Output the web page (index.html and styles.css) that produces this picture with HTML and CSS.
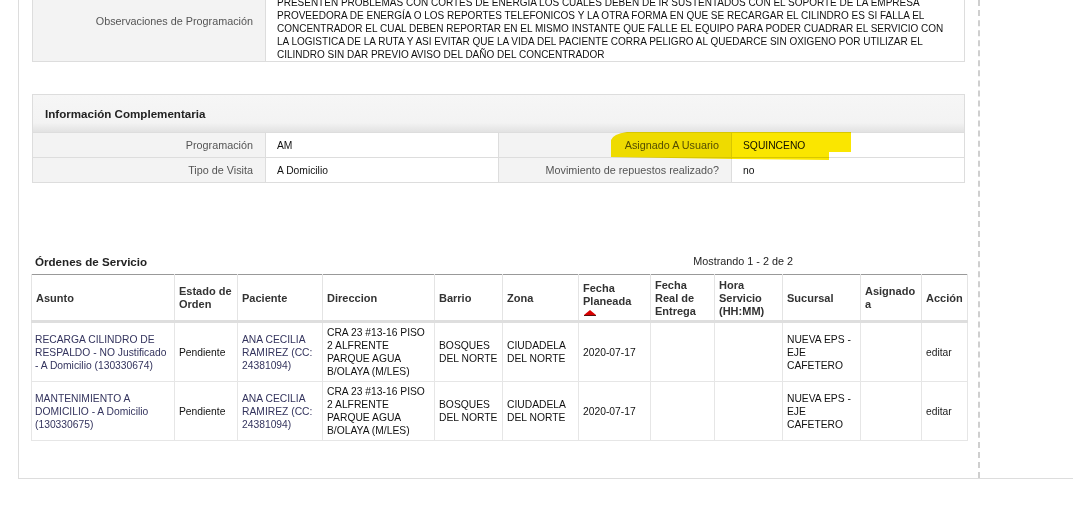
FILE: index.html
```html
<!DOCTYPE html>
<html lang="es">
<head>
    <meta charset="UTF-8">
    <title>Detalle de Programación</title>
    <link rel="stylesheet" href="styles.css">
</head>
<body>
    <div class="page">
        <div class="content">

            <!-- Observaciones -->
            <table class="obs-table">
                <tr>
                    <td class="label">Observaciones de Programación</td>
                    <td class="value obs-text">
                        SE DEBE RECARGAR EL CILINDRO DE RESPALDO UNICAMENTE EN LOS CASOS EN QUE LOS PACIENTES NO CUENTEN CON ENERGIA O<br>
                        PRESENTEN PROBLEMAS CON CORTES DE ENERGIA LOS CUALES DEBEN DE IR SUSTENTADOS CON EL SOPORTE DE LA EMPRESA<br>
                        PROVEEDORA DE ENERGÍA O LOS REPORTES TELEFONICOS Y LA OTRA FORMA EN QUE SE RECARGAR EL CILINDRO ES SI FALLA EL<br>
                        CONCENTRADOR EL CUAL DEBEN REPORTAR EN EL MISMO INSTANTE QUE FALLE EL EQUIPO PARA PODER CUADRAR EL SERVICIO CON<br>
                        LA LOGISTICA DE LA RUTA Y ASI EVITAR QUE LA VIDA DEL PACIENTE CORRA PELIGRO AL QUEDARCE SIN OXIGENO POR UTILIZAR EL<br>
                        CILINDRO SIN DAR PREVIO AVISO DEL DAÑO DEL CONCENTRADOR
                    </td>
                </tr>
            </table>

            <!-- Informacion complementaria -->
            <div class="info">
                <div class="info-head">Información Complementaria</div>
                <table class="info-table">
                    <tr>
                        <td class="label">Programación</td>
                        <td class="value">AM</td>
                        <td class="label">Asignado A Usuario</td>
                        <td class="value">SQUINCENO</td>
                    </tr>
                    <tr>
                        <td class="label">Tipo de Visita</td>
                        <td class="value">A Domicilio</td>
                        <td class="label">Movimiento de repuestos realizado?</td>
                        <td class="value">no</td>
                    </tr>
                </table>
                <svg class="marker" width="244" height="30" viewBox="0 0 244 30">
                    <path d="M1,9 Q3,3 17,1 L241,1 L241,21 L219,21 L219,29 L123,28 L30,26.5 L1,26 Z" fill="#fae600"/>
                </svg>
            </div>

            <!-- Ordenes de servicio -->
            <div class="orders">
                <div class="orders-bar">
                    <span class="orders-title">Órdenes de Servicio</span>
                    <span class="pager">Mostrando 1 - 2 de 2</span>
                </div>
                <table class="orders-table">
                    <thead>
                        <tr>
                            <th class="c-asunto">Asunto</th>
                            <th class="c-estado">Estado de Orden</th>
                            <th class="c-paciente">Paciente</th>
                            <th class="c-dir">Direccion</th>
                            <th class="c-barrio">Barrio</th>
                            <th class="c-zona">Zona</th>
                            <th class="c-fecha">Fecha Planeada<span class="sort-up"></span></th>
                            <th class="c-real">Fecha Real de Entrega</th>
                            <th class="c-hora">Hora Servicio (HH:MM)</th>
                            <th class="c-sucursal">Sucursal</th>
                            <th class="c-asignado">Asignado a</th>
                            <th class="c-accion">Acción</th>
                        </tr>
                    </thead>
                    <tbody>
                        <tr>
                            <td class="asunto"><a href="#">RECARGA CILINDRO DE RESPALDO - NO Justificado - A Domicilio (130330674)</a></td>
                            <td>Pendiente</td>
                            <td><a href="#">ANA CECILIA RAMIREZ (CC: 24381094)</a></td>
                            <td>CRA 23 #13-16 PISO 2 ALFRENTE PARQUE AGUA B/OLAYA (M/LES)</td>
                            <td>BOSQUES DEL NORTE</td>
                            <td>CIUDADELA DEL NORTE</td>
                            <td>2020-07-17</td>
                            <td></td>
                            <td></td>
                            <td>NUEVA EPS - EJE CAFETERO</td>
                            <td></td>
                            <td><a href="#" class="plain">editar</a></td>
                        </tr>
                        <tr>
                            <td class="asunto"><a href="#">MANTENIMIENTO A DOMICILIO - A Domicilio (130330675)</a></td>
                            <td>Pendiente</td>
                            <td><a href="#">ANA CECILIA RAMIREZ (CC: 24381094)</a></td>
                            <td>CRA 23 #13-16 PISO 2 ALFRENTE PARQUE AGUA B/OLAYA (M/LES)</td>
                            <td>BOSQUES DEL NORTE</td>
                            <td>CIUDADELA DEL NORTE</td>
                            <td>2020-07-17</td>
                            <td></td>
                            <td></td>
                            <td>NUEVA EPS - EJE CAFETERO</td>
                            <td></td>
                            <td><a href="#" class="plain">editar</a></td>
                        </tr>
                    </tbody>
                </table>
            </div>

        </div>
    </div>
</body>
</html>
```

FILE: styles.css
```css
body {
    margin: 0;
    background-color: #fff;
    font-family: "Liberation Sans", Arial, sans-serif;
    font-size: 11px;
    line-height: 13px;
    color: #111;
}

/* page is scrolled a bit, top of the first box is hidden */
.page {
    margin-top: -20px;
    margin-left: 18px;
    border-left: 1px solid #ddd;
    border-bottom: 1px solid #ddd;
}

.content {
    width: 946px;
    padding: 0 0 37px 13px;
    border-right: 2px dashed #cfcfcf;
}

table {
    border-collapse: collapse;
}

.label {
    background-color: #f3f3f3;
    color: #555;
    font-size: 10.8px;
    text-align: right;
    padding: 0 12px 0 10px;
}

.value {
    background-color: #fff;
    font-size: 10.3px;
    padding: 0 11px;
}

/* Observaciones */
.obs-table {
    width: 933px;
    table-layout: fixed;
    border: 1px solid #ddd;
}

.obs-table .label {
    width: 233px;
    box-sizing: border-box;
}

.obs-text {
    font-size: 10px;
    padding-top: 2px;
    padding-bottom: 0;
    height: 78px;
    white-space: nowrap;
    border-left: 1px solid #ddd;
}

/* Informacion complementaria */
.info {
    position: relative;
    width: 933px;
    margin-top: 32px;
}

.info-head {
    border: 1px solid #ddd;
    border-bottom: none;
    padding: 12px 12px;
    font-size: 11.6px;
    font-weight: bold;
    color: #222;
    background: linear-gradient(to bottom, #f6f6f6 0, #f3f3f3 75%, #e2e2e2 100%);
}

.info-table {
    width: 100%;
    table-layout: fixed;
    border: 1px solid #ddd;
}

.info-table td {
    border: 1px solid #ddd;
    padding-top: 6px;
    padding-bottom: 5px;
    white-space: nowrap;
}

.marker {
    position: absolute;
    left: 578px;
    top: 37px;
    mix-blend-mode: multiply;
}

/* Ordenes de servicio */
.orders {
    margin: 72px 0 0 -1px;
    width: 936px;
}

.orders-bar {
    display: flex;
    align-items: center;
    padding: 0 0 6px 4px;
}

.orders-title {
    flex: 1;
    font-size: 11.6px;
    font-weight: bold;
    color: #222;
}

.pager {
    margin-right: 174px;
    font-size: 10.8px;
    color: #222;
}

.orders-table {
    width: 936px;
    table-layout: fixed;
    border: 1px solid #e4e4e4;
    border-top: 1px solid #999;
}

.orders-table th {
    box-sizing: border-box;
    text-align: left;
    vertical-align: middle;
    font-weight: bold;
    color: #333;
    padding: 3px 3px 2px 4px;
    height: 47px;
    border-left: 1px solid #e4e4e4;
    border-bottom: 3px solid #dedede;
    background-color: #fff;
}

.orders-table td {
    vertical-align: middle;
    font-size: 10.3px;
    padding: 3px 2px 3px 4px;
    height: 52px;
    border: 1px solid #e6e6e6;
    color: #111;
}

.orders-table td.asunto {
    padding-left: 3px;
}

.orders-table a {
    color: #34345e;
    text-decoration: none;
}

.orders-table a.plain {
    color: #222;
}

.c-asunto { width: 143px; }
.c-estado { width: 63px; }
.c-paciente { width: 85px; }
.c-dir { width: 112px; }
.c-barrio { width: 68px; }
.c-zona { width: 76px; }
.c-fecha { width: 72px; }
.c-real { width: 64px; }
.c-hora { width: 68px; }
.c-sucursal { width: 78px; }
.c-asignado { width: 61px; }
.c-accion { width: 46px; }

.sort-up {
    display: block;
    width: 0;
    height: 0;
    margin: 2px 0 0 1px;
    border-left: 6px solid transparent;
    border-right: 6px solid transparent;
    border-bottom: 5px solid #d90000;
    box-shadow: 0 1px 0 #5a1010;
}
```
